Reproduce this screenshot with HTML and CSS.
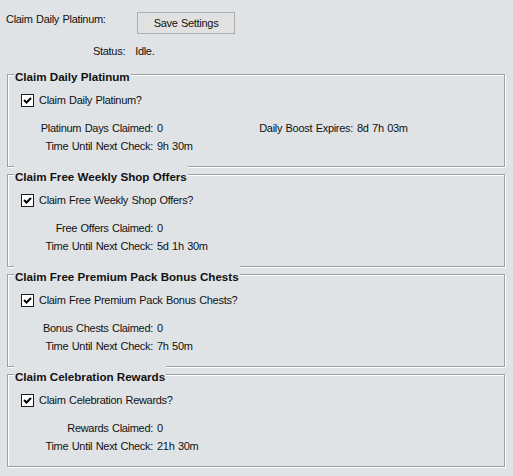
FILE: index.html
```html
<!DOCTYPE html>
<html>
<head>
<meta charset="utf-8">
<link rel="stylesheet" href="styles.css">
</head>
<body>
<div class="form">
  <div class="top-row">
    <span class="top-label">Claim Daily Platinum:</span>
    <button class="btn" type="button">Save Settings</button>
  </div>
  <div class="status-row">
    <span class="status-label">Status:</span>
    <span class="status-value">Idle.</span>
  </div>

  <fieldset class="group">
    <legend class="group-title">Claim Daily Platinum</legend>
    <label class="check-row"><span class="check"><svg viewBox="0 0 11 11" width="11" height="11"><path d="M2 5 L4.5 7.5 L9 3" fill="none" stroke="#000" stroke-width="2"/></svg></span><span>Claim Daily Platinum?</span></label>
    <div class="data">
      <span class="dl">Platinum Days Claimed:</span><span class="dv">0</span><span class="dl">Daily Boost Expires:</span><span class="dv">8d 7h 03m</span>
      <span class="dl">Time Until Next Check:</span><span class="dv">9h 30m</span><span></span><span></span>
    </div>
  </fieldset>

  <fieldset class="group">
    <legend class="group-title">Claim Free Weekly Shop Offers</legend>
    <label class="check-row"><span class="check"><svg viewBox="0 0 11 11" width="11" height="11"><path d="M2 5 L4.5 7.5 L9 3" fill="none" stroke="#000" stroke-width="2"/></svg></span><span>Claim Free Weekly Shop Offers?</span></label>
    <div class="data">
      <span class="dl">Free Offers Claimed:</span><span class="dv">0</span><span></span><span></span>
      <span class="dl">Time Until Next Check:</span><span class="dv">5d 1h 30m</span><span></span><span></span>
    </div>
  </fieldset>

  <fieldset class="group">
    <legend class="group-title">Claim Free Premium Pack Bonus Chests</legend>
    <label class="check-row"><span class="check"><svg viewBox="0 0 11 11" width="11" height="11"><path d="M2 5 L4.5 7.5 L9 3" fill="none" stroke="#000" stroke-width="2"/></svg></span><span>Claim Free Premium Pack Bonus Chests?</span></label>
    <div class="data">
      <span class="dl">Bonus Chests Claimed:</span><span class="dv">0</span><span></span><span></span>
      <span class="dl">Time Until Next Check:</span><span class="dv">7h 50m</span><span></span><span></span>
    </div>
  </fieldset>

  <fieldset class="group">
    <legend class="group-title">Claim Celebration Rewards</legend>
    <label class="check-row"><span class="check"><svg viewBox="0 0 11 11" width="11" height="11"><path d="M2 5 L4.5 7.5 L9 3" fill="none" stroke="#000" stroke-width="2"/></svg></span><span>Claim Celebration Rewards?</span></label>
    <div class="data">
      <span class="dl">Rewards Claimed:</span><span class="dv">0</span><span></span><span></span>
      <span class="dl">Time Until Next Check:</span><span class="dv">21h 30m</span><span></span><span></span>
    </div>
  </fieldset>
</div>
</body>
</html>
```

FILE: styles.css
```css
html, body {
  margin: 0;
  padding: 0;
  background: #e0e3e6;
}
body {
  width: 513px;
  height: 476px;
  overflow: hidden;
  font-family: "Liberation Sans", Arial, sans-serif;
  font-size: 11px;
  line-height: 13px;
  letter-spacing: -0.3px;
  word-spacing: 0.7px;
  color: #111;
}
.form {
  padding-top: 12px;
}
.top-row {
  display: flex;
  align-items: flex-start;
  padding-left: 6px;
}
.top-label {
  margin-top: 1px;
  width: 131px;
}
.btn {
  width: 98px;
  height: 22px;
  margin: 0;
  padding: 0;
  background: #e1e1e1;
  border: 1px solid #adadad;
  font: inherit;
  letter-spacing: inherit;
  word-spacing: inherit;
  color: #111;
}
.status-row {
  display: flex;
  padding-left: 93px;
  margin-top: 11px;
  gap: 10px;
}
.group {
  margin: 8px 8px 0 7px;
  padding: 0 0 13px 0;
  border: 1px solid #a0a0a0;
  box-shadow: 1px 1px 0 #fff, inset 1px 1px 0 #fff;
  min-width: 0;
  box-sizing: border-box;
  width: 498px;
}
.group + .group {
  margin-top: -1px;
}
.group-title {
  margin-left: 6px;
  padding: 4px 1px 0 1px;
  font-weight: bold;
  font-size: 11.6px;
  line-height: 13px;
  letter-spacing: 0;
  word-spacing: 0;
  background: #e0e3e6;
}
.check-row {
  display: flex;
  align-items: center;
  gap: 5px;
  margin: 11px 0 0 13px;
  height: 13px;
}
.check {
  display: flex;
  align-items: center;
  justify-content: center;
  width: 11px;
  height: 11px;
  background: #fff;
  border: 1px solid #1c1c1c;
}
.check svg {
  display: block;
}
.data {
  display: grid;
  grid-template-columns: 145px 55px 145px 1fr;
  row-gap: 5px;
  margin-top: 15px;
}
.dl {
  text-align: right;
  white-space: nowrap;
}
.dv {
  padding-left: 4px;
  white-space: nowrap;
}
```
